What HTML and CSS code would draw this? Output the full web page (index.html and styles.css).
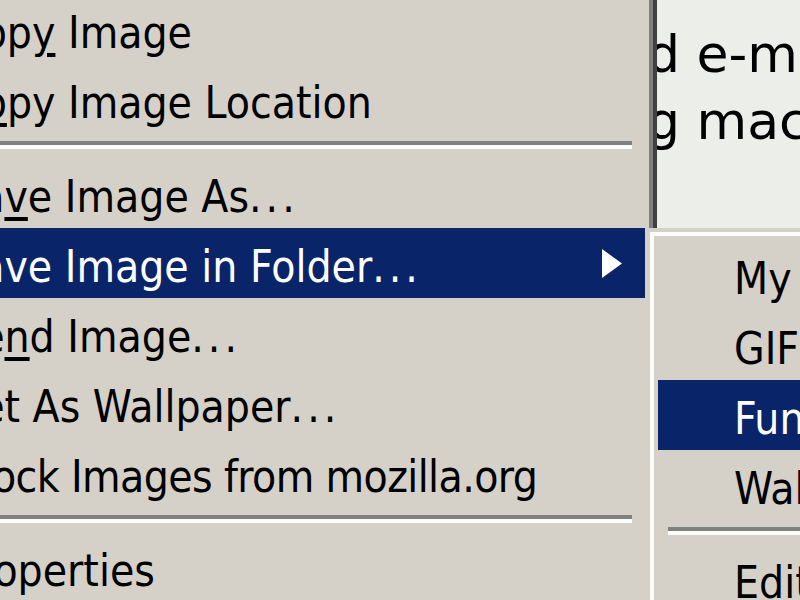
FILE: index.html
```html
<!DOCTYPE html>
<html lang="en">

<head>
    <meta charset="UTF-8">
    <meta name="viewport" content="width=device-width, initial-scale=1.0">
    <title>Context Menu</title>
    <link rel="stylesheet" href="styles.css">
</head>

<body>
    <div class="screen">
        <div class="menu menu-main">
            <div class="item"><span>Cop<u>y</u> Image</span></div>
            <div class="item"><span>C<u>o</u>py Image Location</span></div>
            <div class="sep"></div>
            <div class="item"><span>Sa<u>v</u>e Image As<span class="dots">...</span></span></div>
            <div class="item active">
                <span>Save Image in Folder<span class="dots">...</span></span>
                <svg class="arrow" width="20" height="29" viewBox="0 0 20 29"><polygon points="0,0 20,14.5 0,29" fill="currentColor"/></svg>
            </div>
            <div class="item"><span>Se<u>n</u>d Image<span class="dots">...</span></span></div>
            <div class="item"><span>Set As Wallpaper<span class="dots">...</span></span></div>
            <div class="item tight"><span>Block Images from mozilla.org</span></div>
            <div class="sep"></div>
            <div class="item"><span>Properties</span></div>
        </div>

        <div class="page">
            <p>d e-mail</p>
            <p>g machine</p>
        </div>

        <div class="menu menu-sub">
            <div class="item"><span>My Pictures</span></div>
            <div class="item"><span>GIFs</span></div>
            <div class="item active"><span>Funny</span></div>
            <div class="item"><span>Wallpapers</span></div>
            <div class="sep"></div>
            <div class="item"><span>Edit Folders<span class="dots">...</span></span></div>
        </div>
    </div>
</body>

</html>
```

FILE: styles.css
```css
body {
    margin: 0;
    overflow: hidden;
    background-color: #d5d1c9;
    font-family: "DejaVu Sans Condensed", "DejaVu Sans", sans-serif;
}

.screen {
    position: relative;
    display: flex;
    width: 800px;
    height: 600px;
    overflow: hidden;
}

.menu {
    background-color: #d5d1c9;
    box-sizing: border-box;
}

.menu-main {
    flex: 0 0 782px;
    margin-left: -125px;
    margin-top: -6px;
    padding: 0 8px 0 4px;
    border-right: 4px solid #404040;
    box-shadow: inset -4px 0 0 #808080;
}

.item {
    display: flex;
    height: 70px;
    padding-top: 8px;
    padding-left: 76px;
    box-sizing: border-box;
    font-size: 44px;
    line-height: 62px;
    color: #000;
    white-space: nowrap;
}

.item.tight {
    letter-spacing: -0.6px;
}

.item u {
    text-decoration-thickness: 4px;
    text-underline-offset: 5px;
}

.dots {
    letter-spacing: 4px;
}

.item.active {
    background-color: #0a246a;
    color: #fff;
}

.arrow {
    margin-left: auto;
    margin-right: 23px;
    margin-top: -8px;
    align-self: center;
}

.sep {
    margin: 7px 13px 9px 0;
    border-top: 4px solid #808080;
    border-bottom: 4px solid #fcfcfa;
}

.page {
    flex: 1;
    padding-top: 21px;
    background-color: #eceeea;
    overflow: hidden;
    font-family: "DejaVu Sans", sans-serif;
    font-size: 52px;
    line-height: 67px;
    color: #000;
    white-space: nowrap;
}

.page p {
    margin: 0 0 0 -10px;
}

.menu-sub {
    position: absolute;
    left: 646px;
    top: 228px;
    width: 240px;
    height: 400px;
    padding: 8px 0 0 8px;
    border-top: 4px solid #d5d1c9;
    border-left: 4px solid #d5d1c9;
    box-shadow: inset 4px 4px 0 #fcfcfa;
}

.menu-sub .sep {
    margin: 7px 0 9px 10px;
}
```
